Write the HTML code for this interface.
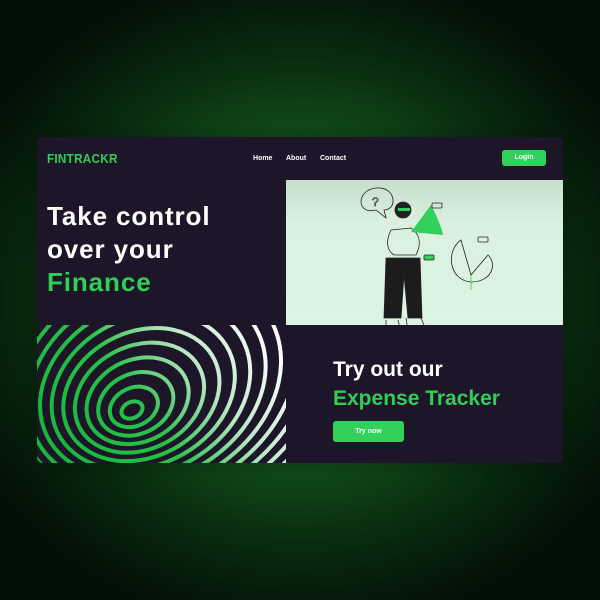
<!DOCTYPE html>
<html><head><style>
*{margin:0;padding:0;box-sizing:border-box}
body{width:600px;height:600px;overflow:hidden;background:radial-gradient(ellipse 360px 330px at 300px 300px,#237e31 0%,#155d20 40%,#0a3010 70%,#031006 100%);font-family:"Liberation Sans",sans-serif;position:relative}
.card{position:absolute;left:37px;top:137px;width:526px;height:326px;background:#1c1628;border-radius:6px;overflow:hidden;box-shadow:0 0 25px rgba(0,0,0,0.35)}
.nav{position:absolute;left:0;top:0;width:526px;height:43px;background:#1c1628}
.logo{position:absolute;left:10px;top:14px;color:#2fcf56;font-weight:900;font-size:13px;letter-spacing:0.3px;transform:scaleX(0.9);transform-origin:left}
.links{position:absolute;top:18px;font-size:7px;color:#fff;font-weight:bold}
.btn{position:absolute;background:#32d05c;color:#fff;font-weight:bold;border-radius:3px;text-align:center}
.h1{position:absolute;left:10px;top:63px;font-size:26px;line-height:33px;color:#fff;font-weight:bold;letter-spacing:0.9px}
.ill{position:absolute;left:249px;top:43px;width:277px;height:145px;background:linear-gradient(180deg,#c6dfcb 0%,#dbf1e0 30%,#ddf4e2 100%)}
.h2{position:absolute;left:296px;top:218px;font-size:21px;line-height:29px;color:#fff;font-weight:bold;letter-spacing:0}
</style></head><body>
<div class="card">
 <div class="nav">
  <div class="logo">FINTRACKR</div>
  <div class="links" style="left:216px">Home</div>
  <div class="links" style="left:249px">About</div>
  <div class="links" style="left:283px">Contact</div>
  <div class="btn" style="left:465px;top:13px;width:44px;height:16px;font-size:7px;line-height:16px">Login</div>
 </div>
 <div class="h1">Take control<br>over your<br><span style="color:#2fcf56">Finance</span></div>
 <div class="ill">
  <svg width="277" height="145" viewBox="0 0 277 145" fill="none" stroke="#222" stroke-width="0.8">
   <path d="M90 30 C70 35 70 10 90 8 C110 6 112 30 98 30 L100 38 Z"/>
   <text x="86" y="26" font-size="12" fill="none" stroke="#222" stroke-width="0.6">?</text>
   <circle cx="117" cy="30" r="8" fill="#222"/>
   <rect x="112" y="28" width="12" height="3" fill="#32d05c" stroke="none"/>
   <path d="M105 50 C100 60 100 70 108 75 L130 75 C135 65 135 55 125 48 Z"/>
   <path d="M100 78 L98 138 L115 138 L118 95 L122 138 L136 138 L134 78 Z" fill="#1c1c1c"/>
   <path d="M100 140 L100 152 L115 152 L112 140 M120 138 L122 150 L140 150 L135 138"/>
   <circle cx="104" cy="150" r="2" fill="#32d05c" stroke="none"/>
   <circle cx="125" cy="148" r="2" fill="#32d05c" stroke="none"/>
   <path d="M125 52 L145 25 C150 35 155 45 157 55 Z" fill="#32d05c" stroke="none"/>
   <rect x="146" y="23" width="10" height="5" rx="1"/>
   <path d="M175 60 C160 70 162 100 185 102 C205 102 212 85 202 75 L185 95 Z"/>
   <line x1="185" y1="95" x2="185" y2="110" stroke="#32d05c"/>
   <rect x="192" y="57" width="10" height="5" rx="1"/>
   <rect x="138" y="75" width="10" height="5" rx="1" fill="#32d05c"/>
  </svg>
 </div>
 <svg style="position:absolute;left:0;top:188px" width="249" height="138" viewBox="0 0 249 138">
  <defs>
   <linearGradient id="g" x1="0" y1="0.7" x2="1" y2="0.3"><stop offset="0" stop-color="#15b83a"/><stop offset="0.4" stop-color="#28c24a"/><stop offset="0.7" stop-color="#bfe8c9"/><stop offset="1" stop-color="#ffffff"/></linearGradient>
   <mask id="m"><g fill="none" stroke="#fff" stroke-width="4" transform="rotate(-25 95 85)">
   <ellipse cx="95" cy="85" rx="11" ry="8"/>
   <ellipse cx="98" cy="83" rx="25" ry="19"/>
   <ellipse cx="101" cy="81" rx="39" ry="30"/>
   <ellipse cx="104" cy="79" rx="53" ry="41"/>
   <ellipse cx="107" cy="77" rx="67" ry="52"/>
   <ellipse cx="110" cy="75" rx="81" ry="63"/>
   <ellipse cx="113" cy="73" rx="95" ry="74"/>
   <ellipse cx="116" cy="71" rx="109" ry="85"/>
   <ellipse cx="119" cy="69" rx="123" ry="96"/>
   <ellipse cx="122" cy="67" rx="137" ry="107"/>
   <ellipse cx="125" cy="65" rx="151" ry="118"/>
   <ellipse cx="128" cy="63" rx="165" ry="129"/>
   <ellipse cx="131" cy="61" rx="179" ry="140"/>
   <ellipse cx="134" cy="59" rx="193" ry="151"/>
   </g></mask>
  </defs>
  <rect width="249" height="138" fill="url(#g)" mask="url(#m)"/>
 </svg>
 <div class="h2">Try out our<br><span style="color:#2fcf56">Expense Tracker</span></div>
 <div class="btn" style="left:296px;top:284px;width:71px;height:21px;font-size:7px;line-height:21px">Try now</div>
</div>
</body></html>
